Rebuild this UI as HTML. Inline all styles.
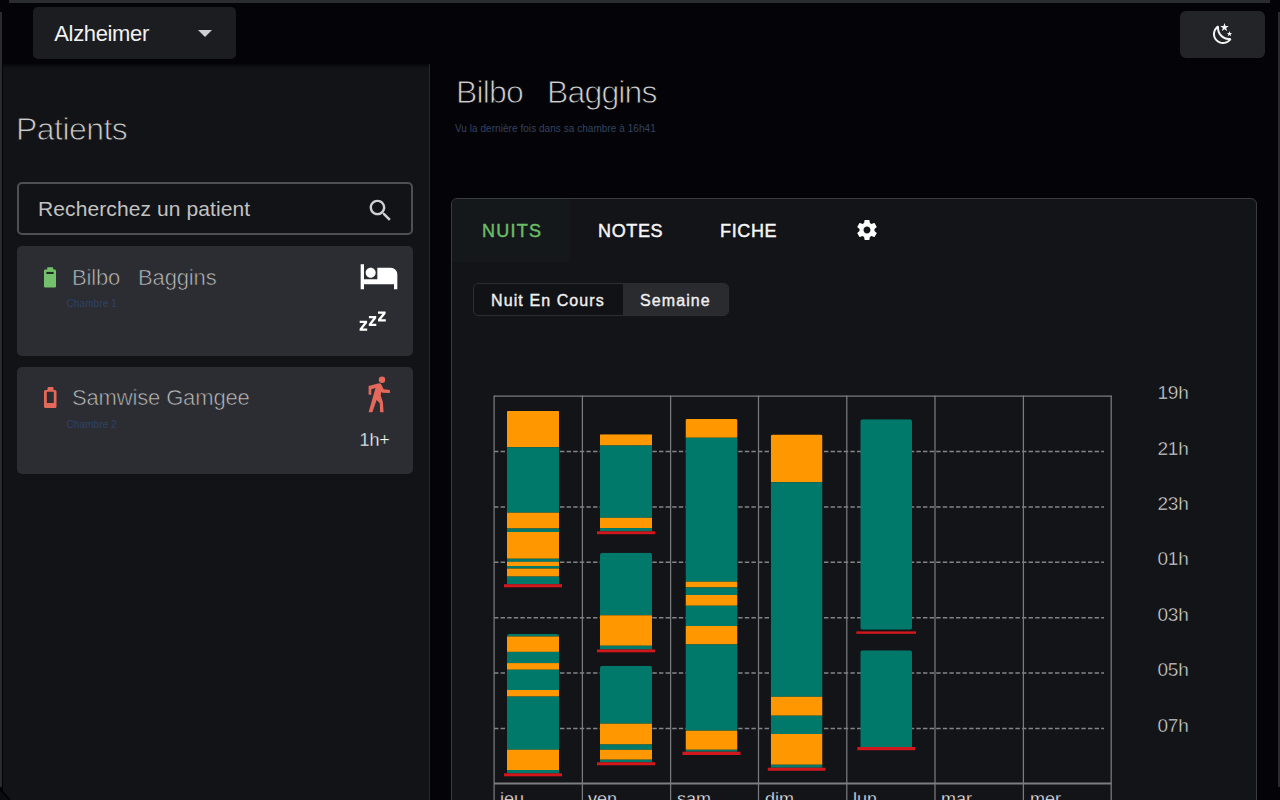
<!DOCTYPE html>
<html><head><meta charset="utf-8">
<style>
*{margin:0;padding:0;box-sizing:border-box}
html,body{width:1280px;height:800px;overflow:hidden;background:#040408;font-family:"Liberation Sans",sans-serif}
.a{position:absolute;white-space:nowrap;line-height:1}
#frameTop{position:absolute;left:9px;top:0;width:1261px;height:3px;background:#2b2c2f}
#frameL{position:absolute;left:0;top:12px;width:2px;height:775px;background:#2a2b2e}
#frameR{position:absolute;left:1278px;top:12px;width:2px;height:775px;background:#2a2b2e}
#group{position:absolute;left:33px;top:7px;width:203px;height:52px;background:#1c1d21;border-radius:5px}
#night{position:absolute;left:1180px;top:11px;width:85px;height:47px;background:#232428;border-radius:6px}
#side{position:absolute;left:3px;top:64px;width:427px;height:736px;background:linear-gradient(#06070a 0,#101115 3.5px,#121317 5px);border-right:1px solid #26272b}
#search{position:absolute;left:17px;top:182px;width:396px;height:53px;border:2px solid #4e4f53;border-radius:5px}
.card{position:absolute;left:17px;width:396px;background:#2c2d32;border-radius:5px}
#chartcard{position:absolute;left:451px;top:198px;width:806px;height:640px;background:#131418;border:1px solid #3b3c40;border-radius:6px;overflow:hidden}
#tabN{position:absolute;left:0;top:0;width:118px;height:63px;background:#15181b}
#toggle{position:absolute;left:473px;top:283px;width:256px;height:33px;border:1px solid #2c2d31;border-radius:5px;background:#111215;overflow:hidden}
#toggle .sel{position:absolute;left:149px;top:0;width:106px;height:31px;background:#2a2b2f}
.ylab{left:1157.5px;margin-top:-1.7px;font-size:19px;letter-spacing:-0.25px;color:#dedede;-webkit-text-stroke:0.45px #131418}
.xlab{top:789.5px;font-size:18px;color:#f2f2f2;-webkit-text-stroke:0.35px #131418}
.pname{left:72px;font-size:22px;color:#bdbdbd;letter-spacing:-0.15px;-webkit-text-stroke:0.6px #2c2d32}
.room{left:66.5px;font-size:10px;color:#2e4268;letter-spacing:0.1px}
.tab{top:221.8px;font-size:18px;font-weight:normal;-webkit-text-stroke:0.45px currentColor;color:#f6f6f6;letter-spacing:0.65px}
.tg{top:292.7px;font-size:16px;font-weight:normal;-webkit-text-stroke:0.4px currentColor;color:#efefef;letter-spacing:1.1px}
</style></head>
<body>
<div id="frameTop"></div><div id="frameL"></div><div id="frameR"></div>

<div id="group"></div>
<div class="a" style="left:54.3px;top:22.5px;font-size:22px;color:#f2f2f2;letter-spacing:-0.35px">Alzheimer</div>
<svg class="a" style="left:196px;top:28px" width="18" height="12" viewBox="0 0 18 12"><path d="M2 2h14l-7 7z" fill="#cfcfd1"/></svg>

<div id="night"></div>

<div id="side"></div>
<div class="a" style="left:16px;top:113px;font-size:32px;color:#cbcbcb;letter-spacing:-0.55px;-webkit-text-stroke:0.9px #121317">Patients</div>
<div id="search"></div>
<div class="a" style="left:38px;top:197.5px;font-size:21px;color:#c2c2c2;letter-spacing:0.1px">Recherchez un patient</div>

<div class="card" style="top:246px;height:110px"></div>
<div class="card" style="top:367px;height:107px"></div>

<div class="a" style="left:456px;top:76px;font-size:32px;color:#d0d0d0;letter-spacing:-0.85px;-webkit-text-stroke:0.9px #040408">Bilbo&nbsp;&nbsp;&nbsp;Baggins</div>
<div class="a" style="left:455px;top:124.3px;font-size:10px;color:#34435f;letter-spacing:0.05px">Vu la dernière fois dans sa chambre à 16h41</div>

<div id="chartcard"><div id="tabN"></div></div>
<div id="toggle"><div class="sel"></div></div>


<!-- night icon -->
<svg class="a" style="left:1211px;top:22px" width="24" height="24" viewBox="0 0 24 24"><path fill="#f4f4f4" d="M17.75,4.09L15.22,6.03L16.13,9.09L13.5,7.28L10.87,9.09L11.78,6.03L9.25,4.09L12.44,4L13.5,1L14.56,4L17.75,4.09M21.25,11L19.61,12.25L20.2,14.23L18.5,13.06L16.8,14.23L17.39,12.25L15.75,11L17.81,10.95L18.5,9L19.19,10.95L21.25,11M18.97,15.95C19.8,15.87 20.69,17.05 20.16,17.8C19.84,18.25 19.5,18.67 19.08,19.07C15.17,23 8.84,23 4.94,19.07C1.03,15.17 1.03,8.83 4.94,4.93C5.34,4.53 5.76,4.17 6.21,3.85C6.96,3.32 8.14,4.21 8.06,5.04C7.79,7.9 8.75,10.87 10.95,13.06C13.14,15.26 16.1,16.22 18.97,15.95M17.33,17.97C14.5,17.81 11.7,16.64 9.53,14.5C7.36,12.31 6.2,9.5 6.04,6.68C3.23,9.82 3.34,14.64 6.35,17.66C9.37,20.67 14.19,20.78 17.33,17.97Z"/></svg>
<!-- search icon -->
<svg class="a" style="left:366px;top:195.5px" width="29" height="29" viewBox="0 0 24 24"><path fill="#cfcfcf" d="M15.5 14h-.79l-.28-.27C15.41 12.59 16 11.11 16 9.5 16 5.91 13.09 3 9.5 3S3 5.91 3 9.5 5.91 16 9.5 16c1.61 0 3.09-.59 4.23-1.57l.27.28v.79l5 4.99L20.49 19l-4.99-5zm-6 0C7.01 14 5 11.99 5 9.5S7.01 5 9.5 5 14 7.01 14 9.5 11.99 14 9.5 14z"/></svg>

<!-- card 1 -->
<svg class="a" style="left:40px;top:264px" width="20" height="26" viewBox="0 0 20 26"><rect x="7.2" y="3.2" width="6" height="3.5" rx="0.8" fill="#74c06d"/><rect x="4" y="5.5" width="12" height="18" rx="1.3" fill="#74c06d"/><rect x="6.4" y="7.9" width="7.2" height="2.1" fill="#1f2a21"/></svg>
<div class="a pname" style="top:267px">Bilbo&nbsp;&nbsp;&nbsp;Baggins</div>
<div class="a room" style="top:298.5px">Chambre 1</div>
<svg class="a" style="left:358.6px;top:256px" width="40" height="40" viewBox="0 0 24 24"><path fill="#ffffff" d="M7 13c1.66 0 3-1.34 3-3S8.66 7 7 7s-3 1.34-3 3 1.34 3 3 3zm12-6h-8v7H3V5H1v15h2v-3h18v3h2v-9c0-2.21-1.79-4-4-4z"/></svg>
<svg class="a" style="left:355px;top:305px" width="36" height="30" viewBox="0 0 36 30"><path fill="#fff" d="M4.7 15.75h7.4v2.2l-4.4 5.6h4.5v2.2h-7.6v-2.1l4.4-5.7h-4.3z"/><path fill="#fff" d="M13.9 11h7.3v2.2l-4.4 5.6h4.5v2.2h-7.5v-2.1l4.4-5.7h-4.3z"/><path fill="#fff" d="M23 6.6h7.6v2.2l-4.5 5.4h4.7v2.2h-7.8v-2.1l4.5-5.5h-4.5z"/></svg>

<!-- card 2 -->
<svg class="a" style="left:40px;top:384px" width="20" height="26" viewBox="0 0 20 26"><path fill="#e36a5a" fill-rule="evenodd" d="M8.5 3h4a1 1 0 0 1 1 1v2h1.5a1.5 1.5 0 0 1 1.5 1.5v15a1.5 1.5 0 0 1-1.5 1.5h-9.5a1.5 1.5 0 0 1-1.5-1.5v-15a1.5 1.5 0 0 1 1.5-1.5h2v-2a1 1 0 0 1 1-1zM6.8 7.8v11.2h7v-11.2z"/></svg>
<div class="a pname" style="top:387.2px">Samwise Gamgee</div>
<div class="a room" style="top:419.5px">Chambre 2</div>
<svg class="a" style="left:360px;top:372px" width="38" height="46" viewBox="0 0 38 46"><circle cx="22" cy="7.8" r="3.2" fill="#e4695b"/><path fill="#e4695b" d="M8.6 14.1L19 11.2Q20.5 11.2 21.3 12.4L23.7 17.3L29.9 18.1V21L22.4 20.8L21.3 19.8L20.7 23.5L22.9 30L23.6 40.3H20.1L19.8 31.3L16.6 28.1L12.4 40.3H8.6L15.5 16L11.3 17.3V22.7H8.6Z"/></svg>
<div class="a" style="left:359.5px;top:430.7px;font-size:18px;color:#f8f8f8;letter-spacing:-0.1px;-webkit-text-stroke:0.3px #2c2d32">1h+</div>

<!-- tabs -->
<div class="a tab" style="left:482px;color:#6bbd67;letter-spacing:1.25px">NUITS</div>
<div class="a tab" style="left:598px">NOTES</div>
<div class="a tab" style="left:720px">FICHE</div>
<svg class="a" style="left:855px;top:218px" width="24" height="24" viewBox="0 0 24 24"><path fill="#ffffff" d="M19.43 12.98c.04-.32.07-.64.07-.98s-.03-.66-.07-.98l2.11-1.65c.19-.15.24-.42.12-.64l-2-3.46c-.12-.22-.39-.3-.61-.22l-2.49 1c-.52-.4-1.08-.73-1.69-.98l-.38-2.65C14.460 2.18 14.25 2 14 2h-4c-.25 0-.46.18-.49.42l-.38 2.65c-.61.25-1.17.59-1.690.98l-2.49-1c-.23-.09-.49 0-.61.22l-2 3.46c-.13.22-.07.49.12.64l2.11 1.65c-.04.32-.07.65-.07.98s.03.66.07.98l-2.11 1.65c-.19.15-.24.42-.12.64l2 3.46c.12.22.39.3.61.22l2.49-1c.52.4 1.08.73 1.69.98l.38 2.650c.03.24.24.42.49.42h4c.25 0 .46-.18.49-.42l.38-2.65c.61-.25 1.17-.59 1.69-.98l2.49 1c.23.09.49 0 .61-.22l2-3.46c.12-.22.07-.49-.12-.64l-2.11-1.65zM12 15.5c-1.93 0-3.5-1.57-3.5-3.5s1.57-3.5 3.5-3.5 3.5 1.57 3.5 3.5-1.57 3.5-3.5 3.5z"/></svg>

<!-- toggle text -->
<div class="a tg" style="left:491px">Nuit En Cours</div>
<div class="a tg" style="left:640px">Semaine</div>

<!-- chart -->
<svg class="a" style="left:0;top:0" width="1280" height="800" viewBox="0 0 1280 800"><line x1="494" y1="451.4" x2="1104" y2="451.4" stroke="#838487" stroke-width="1.5" stroke-dasharray="4.4 2.2"/><line x1="494" y1="506.9" x2="1104" y2="506.9" stroke="#838487" stroke-width="1.5" stroke-dasharray="4.4 2.2"/><line x1="494" y1="562.3" x2="1104" y2="562.3" stroke="#838487" stroke-width="1.5" stroke-dasharray="4.4 2.2"/><line x1="494" y1="617.7" x2="1104" y2="617.7" stroke="#838487" stroke-width="1.5" stroke-dasharray="4.4 2.2"/><line x1="494" y1="673.1" x2="1104" y2="673.1" stroke="#838487" stroke-width="1.5" stroke-dasharray="4.4 2.2"/><line x1="494" y1="728.6" x2="1104" y2="728.6" stroke="#838487" stroke-width="1.5" stroke-dasharray="4.4 2.2"/><line x1="494.1" y1="395.5" x2="494.1" y2="800" stroke="#7a7b7e" stroke-width="1.25"/><line x1="582.4" y1="395.5" x2="582.4" y2="800" stroke="#7a7b7e" stroke-width="1.25"/><line x1="670.6" y1="395.5" x2="670.6" y2="800" stroke="#7a7b7e" stroke-width="1.25"/><line x1="758.5" y1="395.5" x2="758.5" y2="800" stroke="#7a7b7e" stroke-width="1.25"/><line x1="846.8" y1="395.5" x2="846.8" y2="800" stroke="#7a7b7e" stroke-width="1.25"/><line x1="935.0" y1="395.5" x2="935.0" y2="800" stroke="#7a7b7e" stroke-width="1.25"/><line x1="1023.4" y1="395.5" x2="1023.4" y2="800" stroke="#7a7b7e" stroke-width="1.25"/><line x1="1111.2" y1="395.5" x2="1111.2" y2="800" stroke="#7a7b7e" stroke-width="1.25"/><line x1="494" y1="396" x2="1111.5" y2="396" stroke="#7a7b7e" stroke-width="1.25"/><line x1="494" y1="783.5" x2="1111.5" y2="783.5" stroke="#7c7d80" stroke-width="2"/><defs><clipPath id="k1"><rect x="507" y="411" width="52.00" height="176.20" rx="0.4"/></clipPath><clipPath id="k2"><rect x="507" y="634" width="52.00" height="142.30" rx="2.5"/></clipPath><clipPath id="k3"><rect x="600" y="434.25" width="52.00" height="100.05" rx="0.4"/></clipPath><clipPath id="k4"><rect x="600" y="552.75" width="52.00" height="99.75" rx="2.5"/></clipPath><clipPath id="k5"><rect x="600" y="665.8" width="52.00" height="99.45" rx="2.5"/></clipPath><clipPath id="k6"><rect x="685.5" y="419" width="52.00" height="335.70" rx="1.5"/></clipPath><clipPath id="k7"><rect x="770.8" y="434.5" width="51.70" height="336.25" rx="2"/></clipPath><clipPath id="k8"><rect x="860.3" y="419.2" width="51.70" height="210.50" rx="2.5"/></clipPath><clipPath id="k9"><rect x="860.3" y="650.3" width="51.70" height="99.70" rx="2.5"/></clipPath></defs><g clip-path="url(#k1)"><rect x="507" y="411.00" width="52.00" height="36.25" fill="#ff9800"/><rect x="507" y="447.25" width="52.00" height="65.45" fill="#00796b"/><rect x="507" y="512.70" width="52.00" height="15.80" fill="#ff9800"/><rect x="507" y="528.50" width="52.00" height="3.50" fill="#00796b"/><rect x="507" y="532.00" width="52.00" height="26.75" fill="#ff9800"/><rect x="507" y="558.75" width="52.00" height="3.05" fill="#00796b"/><rect x="507" y="561.80" width="52.00" height="4.20" fill="#ff9800"/><rect x="507" y="566.00" width="52.00" height="2.60" fill="#00796b"/><rect x="507" y="568.60" width="52.00" height="8.00" fill="#ff9800"/><rect x="507" y="576.60" width="52.00" height="7.60" fill="#00796b"/></g>
<rect x="504" y="584.20" width="58.00" height="3.10" fill="#d3181d"/>
<g clip-path="url(#k2)"><rect x="507" y="634.00" width="52.00" height="2.50" fill="#00796b"/><rect x="507" y="636.50" width="52.00" height="15.40" fill="#ff9800"/><rect x="507" y="651.90" width="52.00" height="11.20" fill="#00796b"/><rect x="507" y="663.10" width="52.00" height="6.65" fill="#ff9800"/><rect x="507" y="669.75" width="52.00" height="20.25" fill="#00796b"/><rect x="507" y="690.00" width="52.00" height="6.60" fill="#ff9800"/><rect x="507" y="696.60" width="52.00" height="53.15" fill="#00796b"/><rect x="507" y="749.75" width="52.00" height="20.25" fill="#ff9800"/><rect x="507" y="770.00" width="52.00" height="3.30" fill="#00796b"/></g>
<rect x="504" y="773.30" width="58.00" height="3.00" fill="#d3181d"/>
<g clip-path="url(#k3)"><rect x="600" y="434.25" width="52.00" height="11.25" fill="#ff9800"/><rect x="600" y="445.50" width="52.00" height="72.30" fill="#00796b"/><rect x="600" y="517.80" width="52.00" height="10.20" fill="#ff9800"/><rect x="600" y="528.00" width="52.00" height="3.30" fill="#00796b"/></g>
<rect x="597" y="531.30" width="58.00" height="2.90" fill="#d3181d"/>
<g clip-path="url(#k4)"><rect x="600" y="552.75" width="52.00" height="62.55" fill="#00796b"/><rect x="600" y="615.30" width="52.00" height="30.45" fill="#ff9800"/><rect x="600" y="645.75" width="52.00" height="3.75" fill="#00796b"/></g>
<rect x="597" y="649.50" width="58.00" height="2.80" fill="#d3181d"/>
<g clip-path="url(#k5)"><rect x="600" y="665.80" width="52.00" height="57.90" fill="#00796b"/><rect x="600" y="723.70" width="52.00" height="20.80" fill="#ff9800"/><rect x="600" y="744.50" width="52.00" height="5.30" fill="#00796b"/><rect x="600" y="749.80" width="52.00" height="9.90" fill="#ff9800"/><rect x="600" y="759.70" width="52.00" height="2.55" fill="#00796b"/></g>
<rect x="597" y="762.25" width="58.00" height="3.00" fill="#d3181d"/>
<g clip-path="url(#k6)"><rect x="685.5" y="419.00" width="52.00" height="18.75" fill="#ff9800"/><rect x="685.5" y="437.75" width="52.00" height="144.00" fill="#00796b"/><rect x="685.5" y="581.75" width="52.00" height="5.70" fill="#ff9800"/><rect x="685.5" y="587.45" width="52.00" height="7.55" fill="#00796b"/><rect x="685.5" y="595.00" width="52.00" height="10.75" fill="#ff9800"/><rect x="685.5" y="605.75" width="52.00" height="20.25" fill="#00796b"/><rect x="685.5" y="626.00" width="52.00" height="18.40" fill="#ff9800"/><rect x="685.5" y="644.40" width="52.00" height="86.30" fill="#00796b"/><rect x="685.5" y="730.70" width="52.00" height="19.05" fill="#ff9800"/><rect x="685.5" y="749.75" width="52.00" height="1.95" fill="#00796b"/></g>
<rect x="682.5" y="751.70" width="58.00" height="3.30" fill="#d3181d"/>
<g clip-path="url(#k7)"><rect x="770.8" y="434.50" width="51.70" height="47.75" fill="#ff9800"/><rect x="770.8" y="482.25" width="51.70" height="214.55" fill="#00796b"/><rect x="770.8" y="696.80" width="51.70" height="18.90" fill="#ff9800"/><rect x="770.8" y="715.70" width="51.70" height="18.30" fill="#00796b"/><rect x="770.8" y="734.00" width="51.70" height="30.75" fill="#ff9800"/><rect x="770.8" y="764.75" width="51.70" height="3.00" fill="#00796b"/></g>
<rect x="767.8" y="767.75" width="57.70" height="3.00" fill="#d3181d"/>
<g clip-path="url(#k8)"><rect x="860.3" y="419.20" width="51.70" height="210.50" fill="#00796b"/></g>
<rect x="856.3" y="631.40" width="59.70" height="2.40" fill="#d3181d"/>
<g clip-path="url(#k9)"><rect x="860.3" y="650.30" width="51.70" height="96.70" fill="#00796b"/></g>
<rect x="857.3" y="747.00" width="57.70" height="3.20" fill="#d3181d"/></svg>
<div class="a ylab" style="top:385px">19h</div>
<div class="a ylab" style="top:441px">21h</div>
<div class="a ylab" style="top:496px">23h</div>
<div class="a ylab" style="top:551px">01h</div>
<div class="a ylab" style="top:607px">03h</div>
<div class="a ylab" style="top:662px">05h</div>
<div class="a ylab" style="top:718px">07h</div>
<div class="a xlab" style="left:500px">jeu</div>
<div class="a xlab" style="left:588px">ven</div>
<div class="a xlab" style="left:677px">sam</div>
<div class="a xlab" style="left:765px">dim</div>
<div class="a xlab" style="left:853px">lun</div>
<div class="a xlab" style="left:941px">mar</div>
<div class="a xlab" style="left:1030px">mer</div>
<svg class="a" style="left:0;top:786px" width="14" height="14" viewBox="0 0 14 14"><path d="M0 3L10 14H0z" fill="#0b0c0f"/><path d="M0 3L10 14" stroke="#000" stroke-width="1.6"/></svg>
</body></html>
